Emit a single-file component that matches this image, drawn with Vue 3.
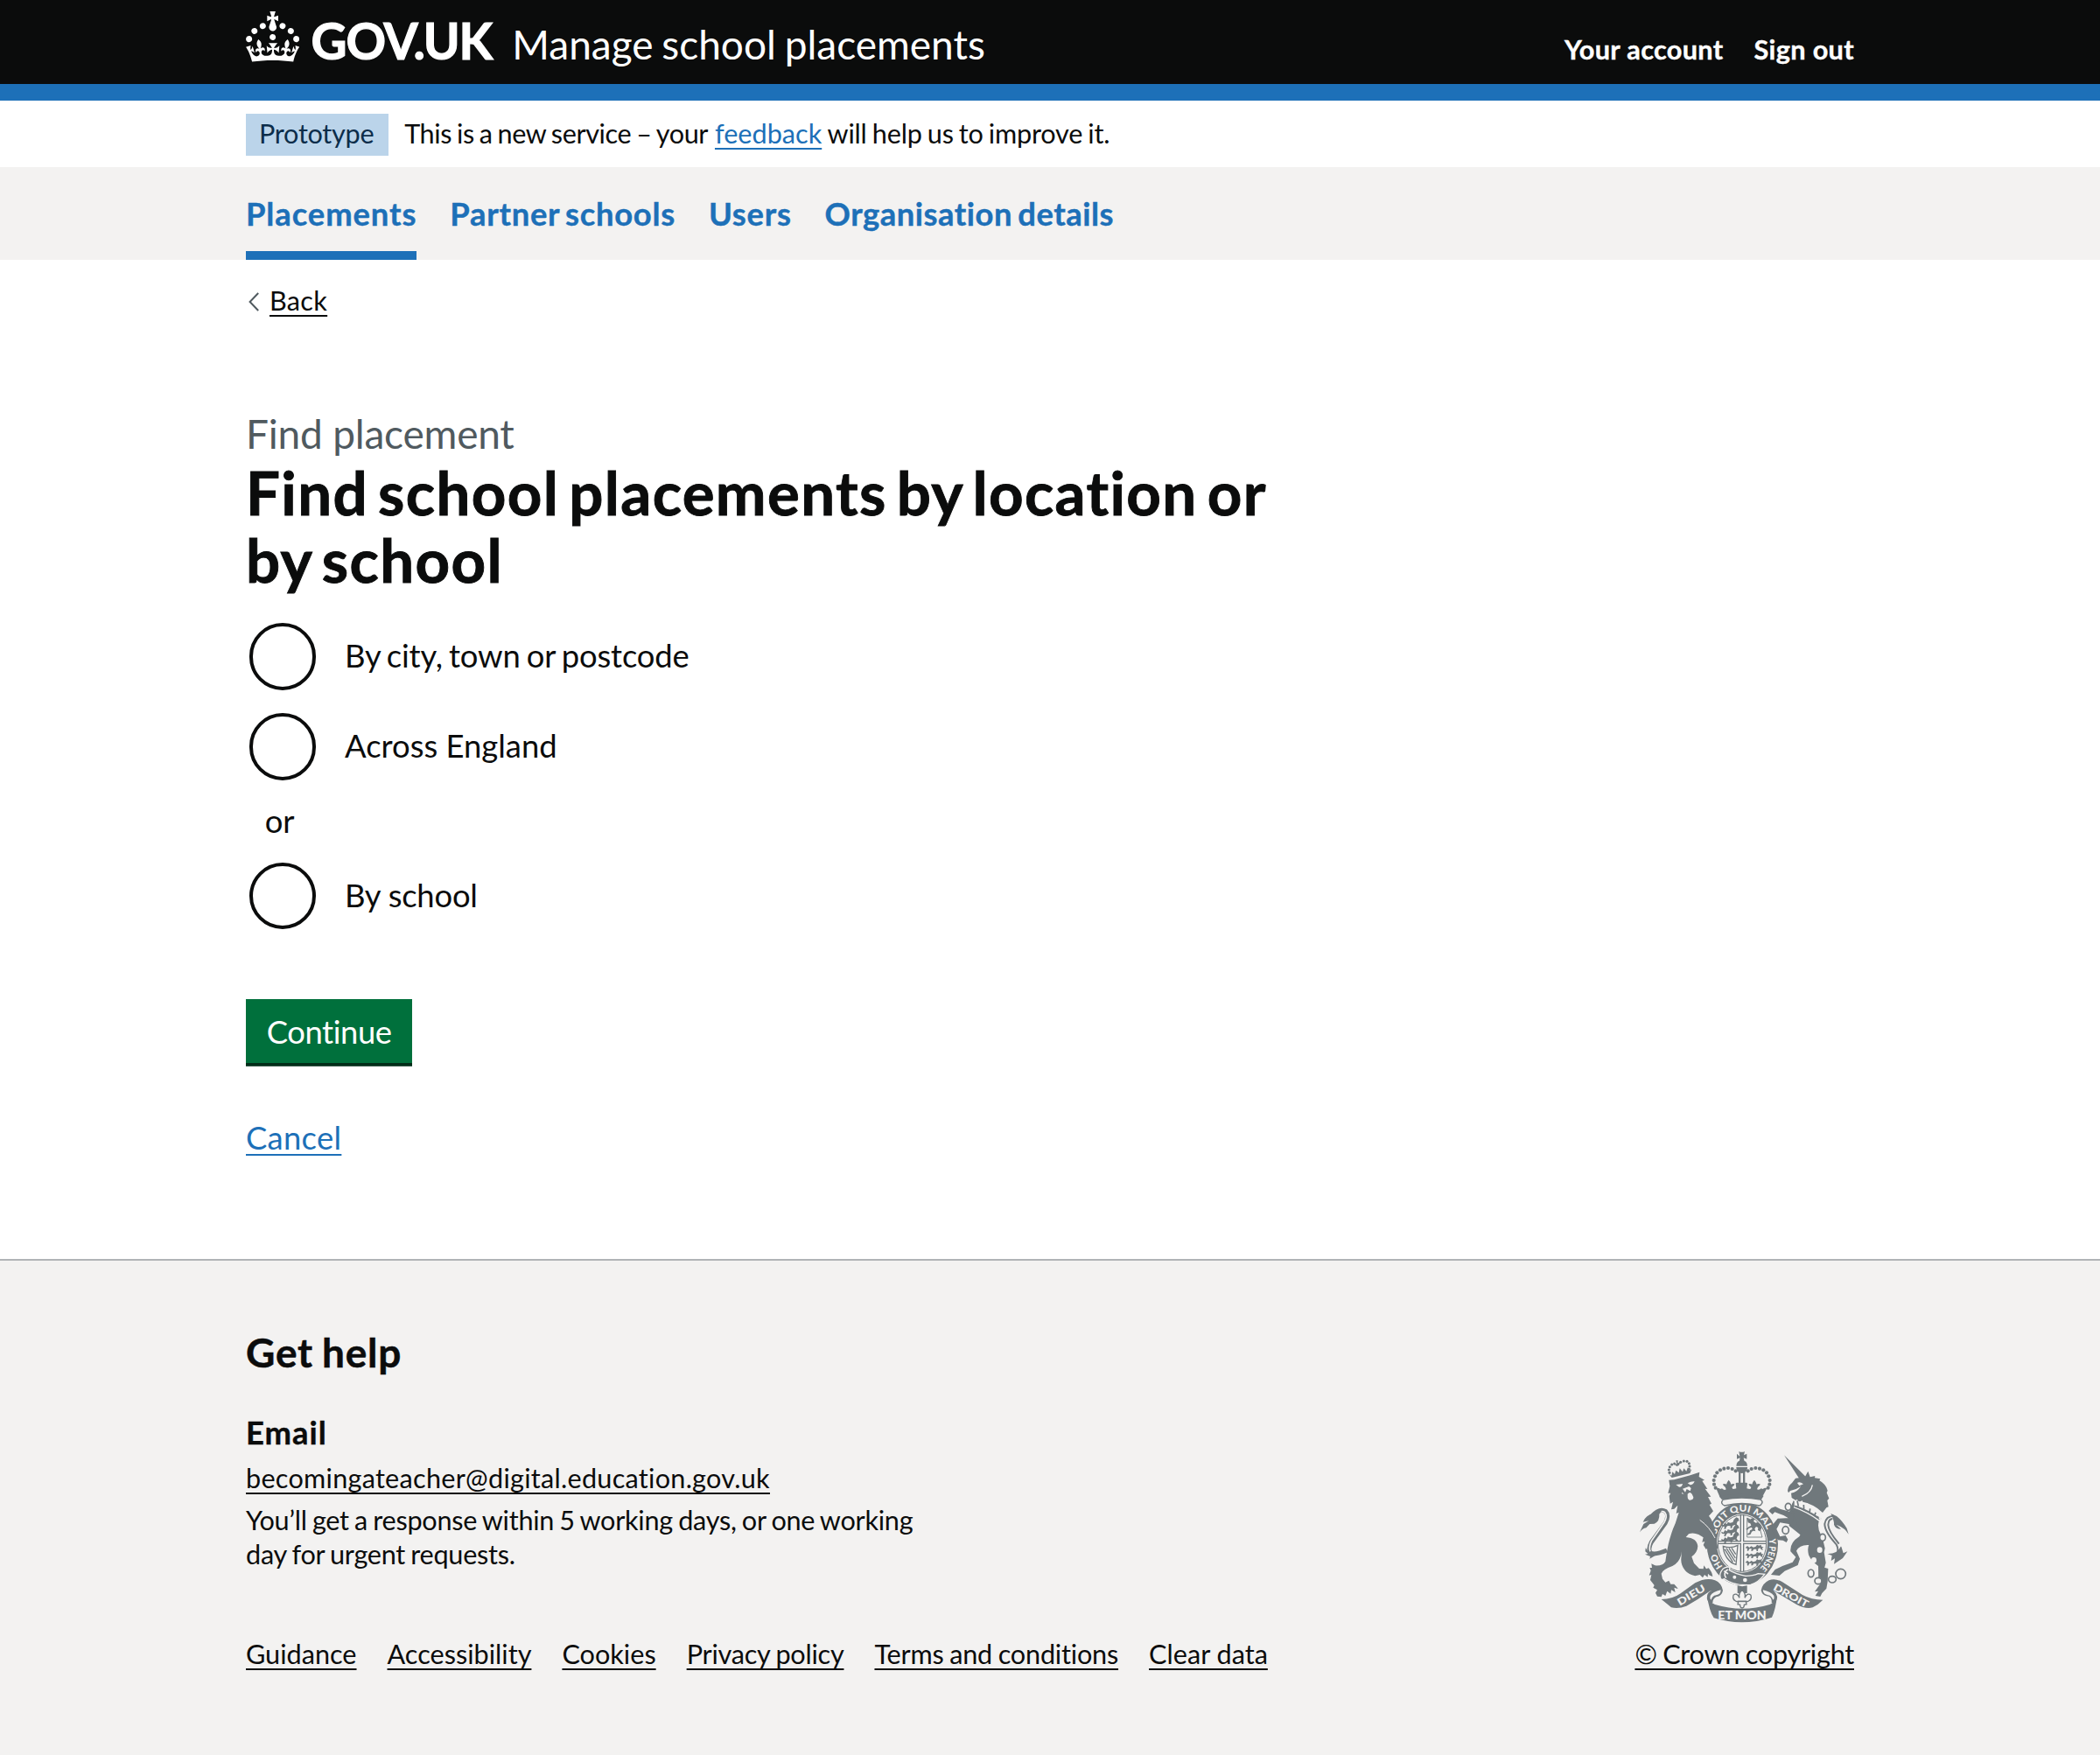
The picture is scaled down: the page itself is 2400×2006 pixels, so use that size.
<script setup>
const sections = ['Placements', 'Partner schools', 'Users', 'Organisation details']
const links = ['Guidance', 'Accessibility', 'Cookies', 'Privacy policy', 'Terms and conditions', 'Clear data']
const lionRows = [0, 1, 2]

// Beads along the arches of the large crown
const beads = [
  [332, 178], [327, 166], [326, 152], [330, 138], [337, 126], [348, 117], [361, 112], [375, 110], [389, 113], [401, 120],
  [512, 178], [517, 166], [518, 152], [514, 138], [507, 126], [496, 117], [483, 112], [469, 110], [455, 113], [443, 120],
]
const smallBeads = [[174, 126], [172, 116], [175, 106], [182, 98], [191, 95], [212, 90], [223, 86], [234, 87], [241, 94], [243, 104], [241, 114]]
const chain = [[581, 243, 10, 12], [572, 323, 11, 13], [699, 348, 10, 12], [659, 471, 10, 13], [684, 497, 12, 11], [732, 492, 13, 11], [761, 473, 17, 17]]
</script>

<template>
  <div class="page">
    <header class="header">
      <div class="container header-row">
        <svg class="crown" viewBox="0 0 32 30" aria-hidden="true">
          <path
            fill="#fff"
            d="M22.6 10.4c-1 .4-2-.1-2.4-1-.4-.9.1-2 1-2.4.9-.4 2 .1 2.4 1s-.1 2-1 2.4m-5.9 6.7c-.9.4-2-.1-2.4-1-.4-.9.1-2 1-2.4.9-.4 2 .1 2.4 1s-.1 2-1 2.4m10.8-3.7c-1 .4-2-.1-2.4-1-.4-.9.1-2 1-2.4.9-.4 2 .1 2.4 1s0 2-1 2.4m3.3 4.8c-1 .4-2-.1-2.4-1-.4-.9.1-2 1-2.4.9-.4 2 .1 2.4 1s-.1 2-1 2.4M17 4.7l2.3 1.2V2.5l-2.3.7-.2-.2.9-3h-3.4l.9 3-.2.2c-.1.1-2.3-.7-2.3-.7v3.4L15 4.7c.1.1.1.2.2.2l-1.3 4c-.1.2-.1.4-.1.6 0 1.1.8 2 1.9 2.2h.7c1-.2 1.9-1.1 1.9-2.1 0-.2 0-.4-.1-.6l-1.3-4c-.1-.2 0-.2.1-.3m-7.6 5.7c.9.4 2-.1 2.4-1 .4-.9-.1-2-1-2.4-.9-.4-2 .1-2.4 1s0 2 1 2.4m-5 3c.9.4 2-.1 2.4-1 .4-.9-.1-2-1-2.4-.9-.4-2 .1-2.4 1s.1 2 1 2.4m-3.2 4.8c.9.4 2-.1 2.4-1 .4-.9-.1-2-1-2.4-.9-.4-2 .1-2.4 1s0 2 1 2.4m14.8 11c4.4 0 8.6.3 12.3.8 1.1-4.5 2.4-7 3.7-8.8l-2.5-.9c.2 1.3.3 1.9 0 2.7-.4-.4-.8-1.1-1.1-2.3l-1.2 4c.7-.5 1.3-.8 2-.9-1.1 2.5-2.6 3.1-3.5 3-1.1-.2-1.7-1.2-1.5-2.1.3-1.2 1.5-1.5 2.1-.1 1.1-2.3-.8-3-2-2.3 1.9-1.9 2.1-3.5.6-5.6-2.1 1.6-2.1 3.2-1.2 5.5-1.2-1.4-3.2-.6-2.5 1.6.9-1.4 2.1-.5 1.9.8-.2 1.1-1.7 2.1-3.5 1.9-2.7-.2-2.9-2.1-2.9-3.6.7-.1 1.9.5 2.9 1.9l.4-4.3c-1.1 1.1-2.1 1.4-3.2 1.4.4-1.2 2.1-3 2.1-3h-5.4s1.7 1.9 2.1 3c-1.1 0-2.1-.2-3.2-1.4l.4 4.3c1-1.4 2.2-2 2.9-1.9-.1 1.5-.2 3.4-2.9 3.6-1.9.2-3.4-.8-3.5-1.9-.2-1.3 1-2.2 1.9-.8.7-2.3-1.2-3-2.5-1.6.9-2.2.9-3.9-1.2-5.5-1.5 2-1.3 3.7.6 5.6-1.2-.7-3.1 0-2 2.3.6-1.4 1.8-1.1 2.1.1.2.9-.3 1.9-1.5 2.1-.9.2-2.4-.5-3.5-3 .6 0 1.2.3 2 .9l-1.2-4c-.3 1.1-.7 1.9-1.1 2.3-.3-.8-.2-1.4 0-2.7l-2.9.9C1.3 23 2.6 25.5 3.7 30c3.7-.5 7.9-.8 12.3-.8"
          />
        </svg>
        <span class="wordmark">GOV.UK</span>
        <span class="service">Manage school placements</span>
        <nav class="account">
          <a>Your account</a>
          <a>Sign out</a>
        </nav>
      </div>
    </header>

    <div class="container phase">
      <strong class="tag">Prototype</strong>
      <p class="phase-text"><span class="lead">This is a new service – your</span> <a class="link blue">feedback</a> <span class="tail">will help us to improve it.</span></p>
    </div>

    <nav class="sections">
      <div class="container sections-row">
        <a v-for="(s, i) in sections" :key="s" class="section" :class="['section-' + i, { current: i === 0 }]">{{ s }}</a>
      </div>
    </nav>

    <main class="container main">
      <div class="back">
        <svg class="chevron" viewBox="0 0 12 22" aria-hidden="true">
          <path d="M11.2 1 1.6 11l9.6 10" fill="none" stroke="#505a5f" stroke-width="2" />
        </svg>
        <a class="link">Back</a>
      </div>

      <div class="caption">Find placement</div>
      <h1 class="title">
        <span>Find school placements by location or</span>
        <span class="second">by school</span>
      </h1>

      <div class="radios">
        <label class="radio"><i class="circle"></i><span class="l-city">By city, town or postcode</span></label>
        <label class="radio"><i class="circle"></i><span>Across England</span></label>
        <div class="divider">or</div>
        <label class="radio"><i class="circle"></i><span class="l-school">By school</span></label>
      </div>

      <button class="button" type="button">Continue</button>
      <div class="cancel"><a class="link blue">Cancel</a></div>
    </main>

    <footer class="footer">
      <div class="container footer-row">
        <div>
          <h2 class="help">Get help</h2>
          <h3 class="email">Email</h3>
          <div class="mail"><a class="link">becomingateacher@digital.education.gov.uk</a></div>
          <p class="response">You’ll get a response within 5 working days, or one working<br />day for urgent requests.</p>
          <div class="links">
            <a v-for="(l, i) in links" :key="l" class="link" :class="'link-' + i">{{ l }}</a>
          </div>
        </div>

        <div class="copyright">
          <svg class="crest" viewBox="72 50 720 590" aria-hidden="true">
            <!-- Large crown -->
            <g class="ink">
              <path d="M415 70l-3-17q10 5 20 0l-3 13 10-5v18l-11-4 3 13h-18l3-13-11 4V61z" />
              <path d="M403 103q1-19 19-19t19 19zM403 107h38v4q-4 17-19 17t-19-17z" />
              <path d="M411 124h7v38h-7zM426 124h7v38h-7z" />
              <circle v-for="(b, i) in beads" :key="i" :cx="b[0]" :cy="b[1]" r="6.2" />
              <path d="M334 180q7-4 14 2l6-2q8 8 14 3l-3-8q-8-4-8-10 8-3 12 1 2-8 8-15 7 7 8 15 6-4 12-1-1 8-9 11l3 6q6 0 12-2l-2-16q-1-4 5-4h30q6 0 5 4l-2 16q6 2 12 2l3-6q-8-3-9-11 6-3 12 1 1-8 8-15 6 7 8 15 4-4 12-1 0 6-8 10l-3 8q8 4 14-3l6 2q7-6 14-2l-18 33q-66-11-142 0z" />
              <path d="M345 205q76-12 152 0l-8 13q-68-10-136 0z" />
            </g>

            <!-- Garter and shield -->
            <path class="ink" fill-rule="evenodd" d="M424 228a122 142 0 1 1 0 284a122 142 0 1 1 0-284zM423 267a87 101 0 1 0 0 202a87 101 0 1 0 0-202z" />
            <path d="M358 218q64-12 128 0 9 6 5 13-3 7-9 8-60-16-119 0-7-2-10-9 0-7 5-12z" class="outline" />
            <ellipse cx="423" cy="368" rx="83" ry="97" class="field" />
            <g class="ink">
              <path d="M416 270h4v93h-78v-4h74zM426 270h4v89h76v4h-80zM342 367h78v98h-4v-94h-74zM426 367h80v4h-76v94h-4z" />
              <path v-for="r in lionRows" :key="r" :transform="`translate(0 ${r * 25})`" d="M352 303l7 3 5-8 7 4 3-7 8 3 9-2 4-10 8-7 7 3 3 9-6 2-3 9 6 8-6 1-6-6-8 3-2 8-5 0 0-7-9-1-5 4-3 8-5-2 2-8-6 1-5-3z" />
              <path v-for="r in lionRows" :key="'b' + r" :transform="`translate(0 ${r * 25})`" d="M434 384l7-7 7 6 6-5 8 4 8-3 4-6 7 3 6-3 3 7 7 0-5 4 2 8-6-3-4-5-6 3-1 8-5-1 0-6-9 0-4 6-5 0 1-8-7 1-4 8-4-2 1-7z" />
              <path d="M440 281l11 7 3-5 8-2 3 7-4 6 8 4 8-2 10 9 3 12-6 10-7-4 1-9-7-3-5 7 3 9-7-2-6 3-4 9-9 3-2-5 7-3 2-8 8-4-2-7-9 3-7 7-4-4 9-7 9-5-3-7-8-3z" />
            </g>
            <path d="M440 281v66h52q-8-50-52-66z" class="thin" />
            <path d="M358 378q26 9 50-3l-6 66q-17-4-30-22-14-20-14-41zM369 385l30 46M378 385l22 34M387 384l14 22M363 388l28 44" class="string" />
            <g class="letter">
              <path id="garter-left" d="M357 448Q341 428 334 396" fill="none" />
              <path id="garter-top" d="M335 338A92 106 0 0 1 513 338" fill="none" />
              <path id="garter-right" d="M515 354A92 106 0 0 1 478 458" fill="none" />
              <text font-size="31"><textPath href="#garter-left" textLength="50" lengthAdjust="spacingAndGlyphs">HO</textPath></text>
              <text font-size="31"><textPath href="#garter-top" textLength="240" lengthAdjust="spacingAndGlyphs">SOIT QUI MAL</textPath></text>
              <text font-size="31"><textPath href="#garter-right" textLength="108" lengthAdjust="spacingAndGlyphs">Y PENSE</textPath></text>
            </g>
            <g class="edge">
              <path class="ink" d="M357 456q12-10 24-6l-2 10q22 14 56 20 26 0 43-8l22 2q-20 28-48 36-55 5-90-20-9 6-13-2-6-16 8-32z" />
            </g>
            <circle cx="397" cy="484" r="6" class="paper" />
            <circle cx="433" cy="494" r="7" class="paper" />
            <path d="M374 458q-18 10-6 29M361 463l14 10" class="strap" />

            <!-- Lion -->
            <path d="M112 276Q140 246 160 258 174 272 160 298L112 364Q98 390 110 402 128 408 165 392" class="tail-ink" />
            <path d="M126 272Q146 252 158 262 168 274 156 296L112 360Q102 382 108 396" class="tail-paper" />
            <g class="ink">
              <path d="M182 143l62-15 6-14-7 5-6-12-5 14-9-10-4 12-10-12-3 15-10-8-4 13-8-8-3 13-9-5z" />
              <path d="M199 104l-8-7 8-1-3-12h7l-1 9 9-3-4 10z" />
              <circle v-for="(b, i) in smallBeads" :key="i" :cx="b[0]" :cy="b[1]" r="4.6" />
              <path d="M172 151L190 150 245 135 277 124 275 140 294 151 286 154 304 182 296 181 316 208 306 209 318 232 311 236 324 258 309 274Q322 290 328 315L333 345 340 385 330 390 324 382 316 396 306 380 300 390 290 374 295 362 286 364 290 348 274 338Q255 330 240 336L230 347Q268 350 271 378 270 400 250 414L258 436 276 455 290 456 292 444 300 456 308 453Q320 466 322 482L312 478 306 472 305 484 294 476 288 486 278 476 262 480Q240 476 228 462 212 442 214 420L216 396Q212 432 184 446 150 458 146 472L150 490 160 502 172 496 178 508 190 508 204 524 190 520 194 536 180 528 178 541 166 532 160 548 150 542 146 552 132 550 126 538 132 528 118 520 122 512 108 494 112 476 104 478 110 462 106 452 114 452 112 438 124 444Q152 446 160 430 164 400 170 372 180 330 194 300L206 262 197 266 202 238 190 250 180 252 186 226 176 232 173 206 178 196 169 196 175 172Z" />
              <path d="M72 330l13-28 18-11-20 4q11-24 34-28l14-13 16 3-8 11q2 24-17 33l-16 1-12 13q-12 2-22 15z" />
              <path d="M92 384l10 14 14 3 38-8-16 12q-12 0-18 8l-14 8 2-8-18-7 10-2-9-8z" />
            </g>
            <g class="paper">
              <path d="M196 167l23-3q-2 12-12 11zM236 162q12-7 24-6-5 12-15 12z" />
              <path d="M219 181l22-8 7 6-3 10-12-7-5 11zM236 199q8-10 15 0l5 11q0 10-11 10-9-1-9-12zM216 193l8 6-8-1z" />
            </g>
            <path d="M278 288Q312 312 330 350" class="fur" />

            <!-- Unicorn -->
            <g class="ink">
              <path d="M567 66l75 75-19 12z" />
              <path d="M579 188q2-18 15-27l12-16q16-3 31-2l12-22 7 20 17-4-1 7 19 3-3 6q22 12 28 34l-3 8 8 19-6 7 4 22-7 3-13 17-18-15q-36-24-69-24l-19-12-2-16q22-4 33-23-17 12-36 15l-6 7z" />
              <path d="M598 226L584 262 584 308 630 345 624 250Z" />
              <path d="M599 222l96 61-9 10q-6 21 6 43 10 22 15 49l-3 14 6 36-6 22-4 41-15 10-1-62q-24-17-33-38-5-23 1-34-32-2-43 20l12 27-7 22-45 20-18 16-29-3 14-18 25-12 35-13 11-18-18-19q-3-30 30-51l8-14-15-27-9-26-8-27-3-12z" />
              <path d="M599 292l-34-20-30-11-8 8-13-12 9-10 14-5 18 9 31 8 13 12zM596 304l-43-7-12 22 12 26 19-4 8 14-5 10-12-7-17-1-19-29-3-19 21-26 52-3z" />
              <path d="M700 450L718 455 716 500 712 523 697 539 691 551 674 548 684 532 672 534 690 508 695 480z" />
              <path d="M788 337l-6-20q-15-26-35-42l-20-9q12 25 11 38 5 15 24 15l-16-15q31 12 42 33zM763 379l7 23 14-6-16 23-30 20 3-19-13 8 3-18-16-6q35 1 46-25z" />
            </g>
            <path d="M602 225l9-8 8 10 10-6 5 15 14-6 3 15 15-3 0 15 14 0 0 20 13 2-3 7q-40-31-88-46z" class="paper" />
            <path d="M600 244q48 17 88 47l9-16" class="stroke-paper" />
            <path d="M604 240q48 17 82 42M612 222l4 19M634 236l1 17M656 249l-2 17M675 262l-4 14" class="strap-ink" />
            <path d="M612 161q8-6 21 4l-14 6z" class="paper" />
            <path d="M628 207q32-13 36-39" class="stroke-paper" />
            <path d="M738 274q-28 0-32 28 0 26 40 70 12 22-3 44M733 284q-14 0-15 21 1 22 37 65" class="thick" />
            <ellipse v-for="(c, i) in chain" :key="i" :cx="c[0]" :cy="c[1]" :rx="c[2]" :ry="c[3]" class="ring" />
            <ellipse cx="689" cy="391" rx="9" ry="10" class="paper" />
            <ellipse cx="669" cy="426" rx="9" ry="10" class="paper" />

            <!-- Ribbon -->
            <g class="ink">
              <path d="M146 560Q185 560 212 540L262 504Q300 484 330 495 352 504 357 530 354 548 334 552 322 558 322 572L314 575Q300 566 303 548 305 535 320 530L312 532Q270 562 232 583 205 594 180 588 165 575 146 560Z" />
              <path d="M303 548Q306 568 330 578 424 606 518 578 545 566 543 548 538 594 525 622 424 655 326 624 310 600 303 548Z" />
              <path d="M700 562Q660 562 630 545L560 500Q535 486 515 495 492 506 488 530 492 548 515 550 526 556 524 572L532 575Q545 562 543 550 540 538 530 530 560 548 610 578 640 594 665 588 685 578 700 562Z" />
            </g>
            <path class="paper" d="M314 548Q322 534 350 528 350 544 334 546 320 548 317 562 311 556 314 548ZM532 548Q522 534 494 528 496 544 512 546 524 548 529 562 535 556 532 548Z" />
            <g class="letter">
              <text transform="translate(209 583) rotate(-31)" font-size="34" textLength="106" lengthAdjust="spacingAndGlyphs">DIEU</text>
              <text transform="translate(340 628) rotate(0)" font-size="42" textLength="166" lengthAdjust="spacingAndGlyphs">ET MON</text>
              <text transform="translate(527 526) rotate(29)" font-size="34" textLength="132" lengthAdjust="spacingAndGlyphs">DROIT</text>
            </g>
            <path class="ink" d="M407 513q16 5 33 0v26h-33z" />
            <path class="outline" d="M423 528q14 14 9 27 9-19 21-9 4 14-8 20l-9 3 2 8-8 2q0 11-7 11t-7-11l-8-2 2-8-9-3q-12-6-8-20 12-10 21 9-5-13 9-27z" />
            <path d="M407 567h32" class="strap-ink" />
          </svg>
          <a class="link">© Crown copyright</a>
        </div>
      </div>
    </footer>
  </div>
</template>

<style>
body {
  margin: 0;
  background: #fff;
}
</style>

<style scoped>
.page {
  font-family: Lato, 'Liberation Sans', sans-serif;
  font-size: 30.63px;
  line-height: 38.3px;
  color: #0b0c0c;
  font-variant-ligatures: none;
  min-height: 2006px;
  display: flex;
  flex-direction: column;
}
.container {
  width: 1838px;
  margin: 0 auto;
}
h1, h2, h3, p {
  margin: 0;
}
.link {
  text-decoration: underline;
  text-decoration-thickness: 2px;
  text-underline-offset: 5px;
  text-decoration-skip-ink: none;
}
.blue {
  color: #1d70b8;
}

.header {
  height: 96px;
  background: #0b0c0c;
  border-bottom: 19px solid #1d70b8;
  color: #fff;
}
.header-row {
  display: flex;
  align-items: baseline;
}
.crown {
  align-self: flex-start;
  width: 61.3px;
  height: 57.5px;
  margin-top: 13px;
}
.wordmark {
  width: 229.7px;
  margin-left: 13.3px;
  font-size: 56.5px;
  font-weight: 700;
  letter-spacing: -1.2px;
  -webkit-text-stroke: 1.2px;
}
.service {
  font-size: 46px;
  line-height: 101.4px;
  word-spacing: -2px;
}
.account {
  display: flex;
  gap: 35px;
  margin-left: auto;
  font-weight: 700;
  letter-spacing: 0.35px;
  -webkit-text-stroke: 0.4px;
}

.phase {
  display: flex;
  height: 61px;
  padding-top: 15px;
  line-height: 45.3px;
}
.tag {
  box-sizing: border-box;
  width: 162.7px;
  height: 47.8px;
  padding-left: 15px;
  background: #bbd4ea;
  color: #0c2d4a;
  font-weight: 400;
  letter-spacing: -0.27px;
}
.phase-text {
  margin-left: 18.5px;
  white-space: nowrap;
}
.lead {
  letter-spacing: -0.4px;
  word-spacing: -1.5px;
}
.tail {
  margin-left: -1.5px;
  letter-spacing: -0.2px;
  word-spacing: -1.5px;
}

.sections {
  background: #f3f2f1;
}
.sections-row {
  display: flex;
  gap: 38px;
}
.section {
  padding-top: 9.7px;
  border-bottom: 10px solid transparent;
  font-size: 36.4px;
  line-height: 86px;
  font-weight: 700;
  color: #1d70b8;
  -webkit-text-stroke: 0.4px;
}
.section-0 { letter-spacing: 0.9px; }
.section-1 { letter-spacing: 0.7px; word-spacing: -3px; }
.section-2 { letter-spacing: 0.7px; }
.section-3 { letter-spacing: 0.5px; word-spacing: -3px; }
.current {
  border-color: #1d70b8;
}

.back {
  display: flex;
  gap: 12.5px;
  margin-top: 28.4px;
  padding-left: 2.5px;
}
.back .link {
  letter-spacing: 0.3px;
}
.chevron {
  width: 12px;
  height: 22px;
  margin-top: 9px;
}
.caption {
  margin-top: 103.9px;
  font-size: 46px;
  line-height: 57.4px;
  letter-spacing: -0.2px;
  color: #505a5f;
}
.title {
  display: flex;
  flex-direction: column;
  padding-top: 0.6px;
  font-size: 69px;
  line-height: 76.3px;
  letter-spacing: 1.35px;
  word-spacing: -7px;
  -webkit-text-stroke: 0.9px;
}
.title .second {
  letter-spacing: 1.4px;
}
.radios {
  padding-top: 34.2px;
  font-size: 36.4px;
  line-height: 74px;
}
.radio {
  display: flex;
  height: 76.6px;
  margin-bottom: 26.7px;
  padding-left: 3.8px;
}
.circle {
  box-sizing: border-box;
  width: 76.6px;
  height: 76.6px;
  margin-right: 32.6px;
  border: 4px solid #0b0c0c;
  border-radius: 50%;
}
.l-city {
  letter-spacing: -0.15px;
  word-spacing: -2px;
}
.l-school {
  letter-spacing: -0.2px;
}
.divider {
  margin-top: -4.2px;
  margin-bottom: 23.2px;
  padding-left: 21.7px;
  line-height: 48px;
}
.radio:last-child {
  margin-bottom: 0;
}
.button {
  display: block;
  width: 190.3px;
  height: 73px;
  margin: 80px 0 0;
  padding: 0;
  border: 0;
  background: #00703c;
  box-shadow: 0 3.8px 0 #002d18;
  color: #fff;
  font-family: inherit;
  font-size: 36.4px;
  line-height: 72px;
  letter-spacing: -0.4px;
}
.cancel {
  margin: 60.6px 0 115.6px;
  font-size: 36.4px;
  line-height: 48px;
  letter-spacing: 0.3px;
}

.footer {
  flex: 1;
  border-top: 2px solid #b1b4b6;
  background: #f3f2f1;
}
.footer-row {
  display: flex;
  justify-content: space-between;
  align-items: flex-end;
  padding-top: 75.5px;
}
.help {
  font-size: 46px;
  line-height: 57.4px;
  letter-spacing: 0.8px;
  word-spacing: -2px;
  -webkit-text-stroke: 0.5px;
}
.email {
  margin-top: 38.7px;
  font-size: 36.4px;
  line-height: 48px;
  letter-spacing: 1px;
  -webkit-text-stroke: 0.4px;
}
.mail {
  margin-top: 10.4px;
  letter-spacing: 0.26px;
}
.response {
  margin-top: 9.7px;
  letter-spacing: -0.25px;
  word-spacing: -1.4px;
}
.links {
  display: flex;
  gap: 35px;
  margin-top: 76px;
}
.link-3 { letter-spacing: -0.25px; word-spacing: -1px; }
.link-4 { letter-spacing: -0.2px; word-spacing: -1px; }
.copyright {
  display: flex;
  flex-direction: column;
  align-items: center;
  letter-spacing: -0.25px;
  word-spacing: -1px;
}
.crest {
  width: 240px;
  height: 196.7px;
  margin-bottom: 17px;
}

.ink { fill: #70787c; }
.paper { fill: #f3f2f1; }
.outline { fill: #f3f2f1; stroke: #70787c; stroke-width: 4; }
.field { fill: #f3f2f1; stroke: #70787c; stroke-width: 3; }
.thin { fill: none; stroke: #70787c; stroke-width: 2.5; }
.string { fill: none; stroke: #70787c; stroke-width: 4; }
.strap { fill: none; stroke: #f3f2f1; stroke-width: 5; }
.strap-ink { fill: none; stroke: #70787c; stroke-width: 5; }
.stroke-paper { fill: none; stroke: #f3f2f1; stroke-width: 4; }
.fur { fill: none; stroke: #f3f2f1; stroke-width: 3; }
.edge { stroke: #f3f2f1; stroke-width: 4; }
.thick { fill: none; stroke: #70787c; stroke-width: 6; }
.tail-ink { fill: none; stroke: #70787c; stroke-width: 15; }
.tail-paper { fill: none; stroke: #f3f2f1; stroke-width: 5; }
.ring { fill: #f3f2f1; stroke: #70787c; stroke-width: 5; }
.letter {
  fill: #f3f2f1;
  font-family: Lato, sans-serif;
  font-weight: 900;
  letter-spacing: 0;
  word-spacing: 0;
}
</style>
